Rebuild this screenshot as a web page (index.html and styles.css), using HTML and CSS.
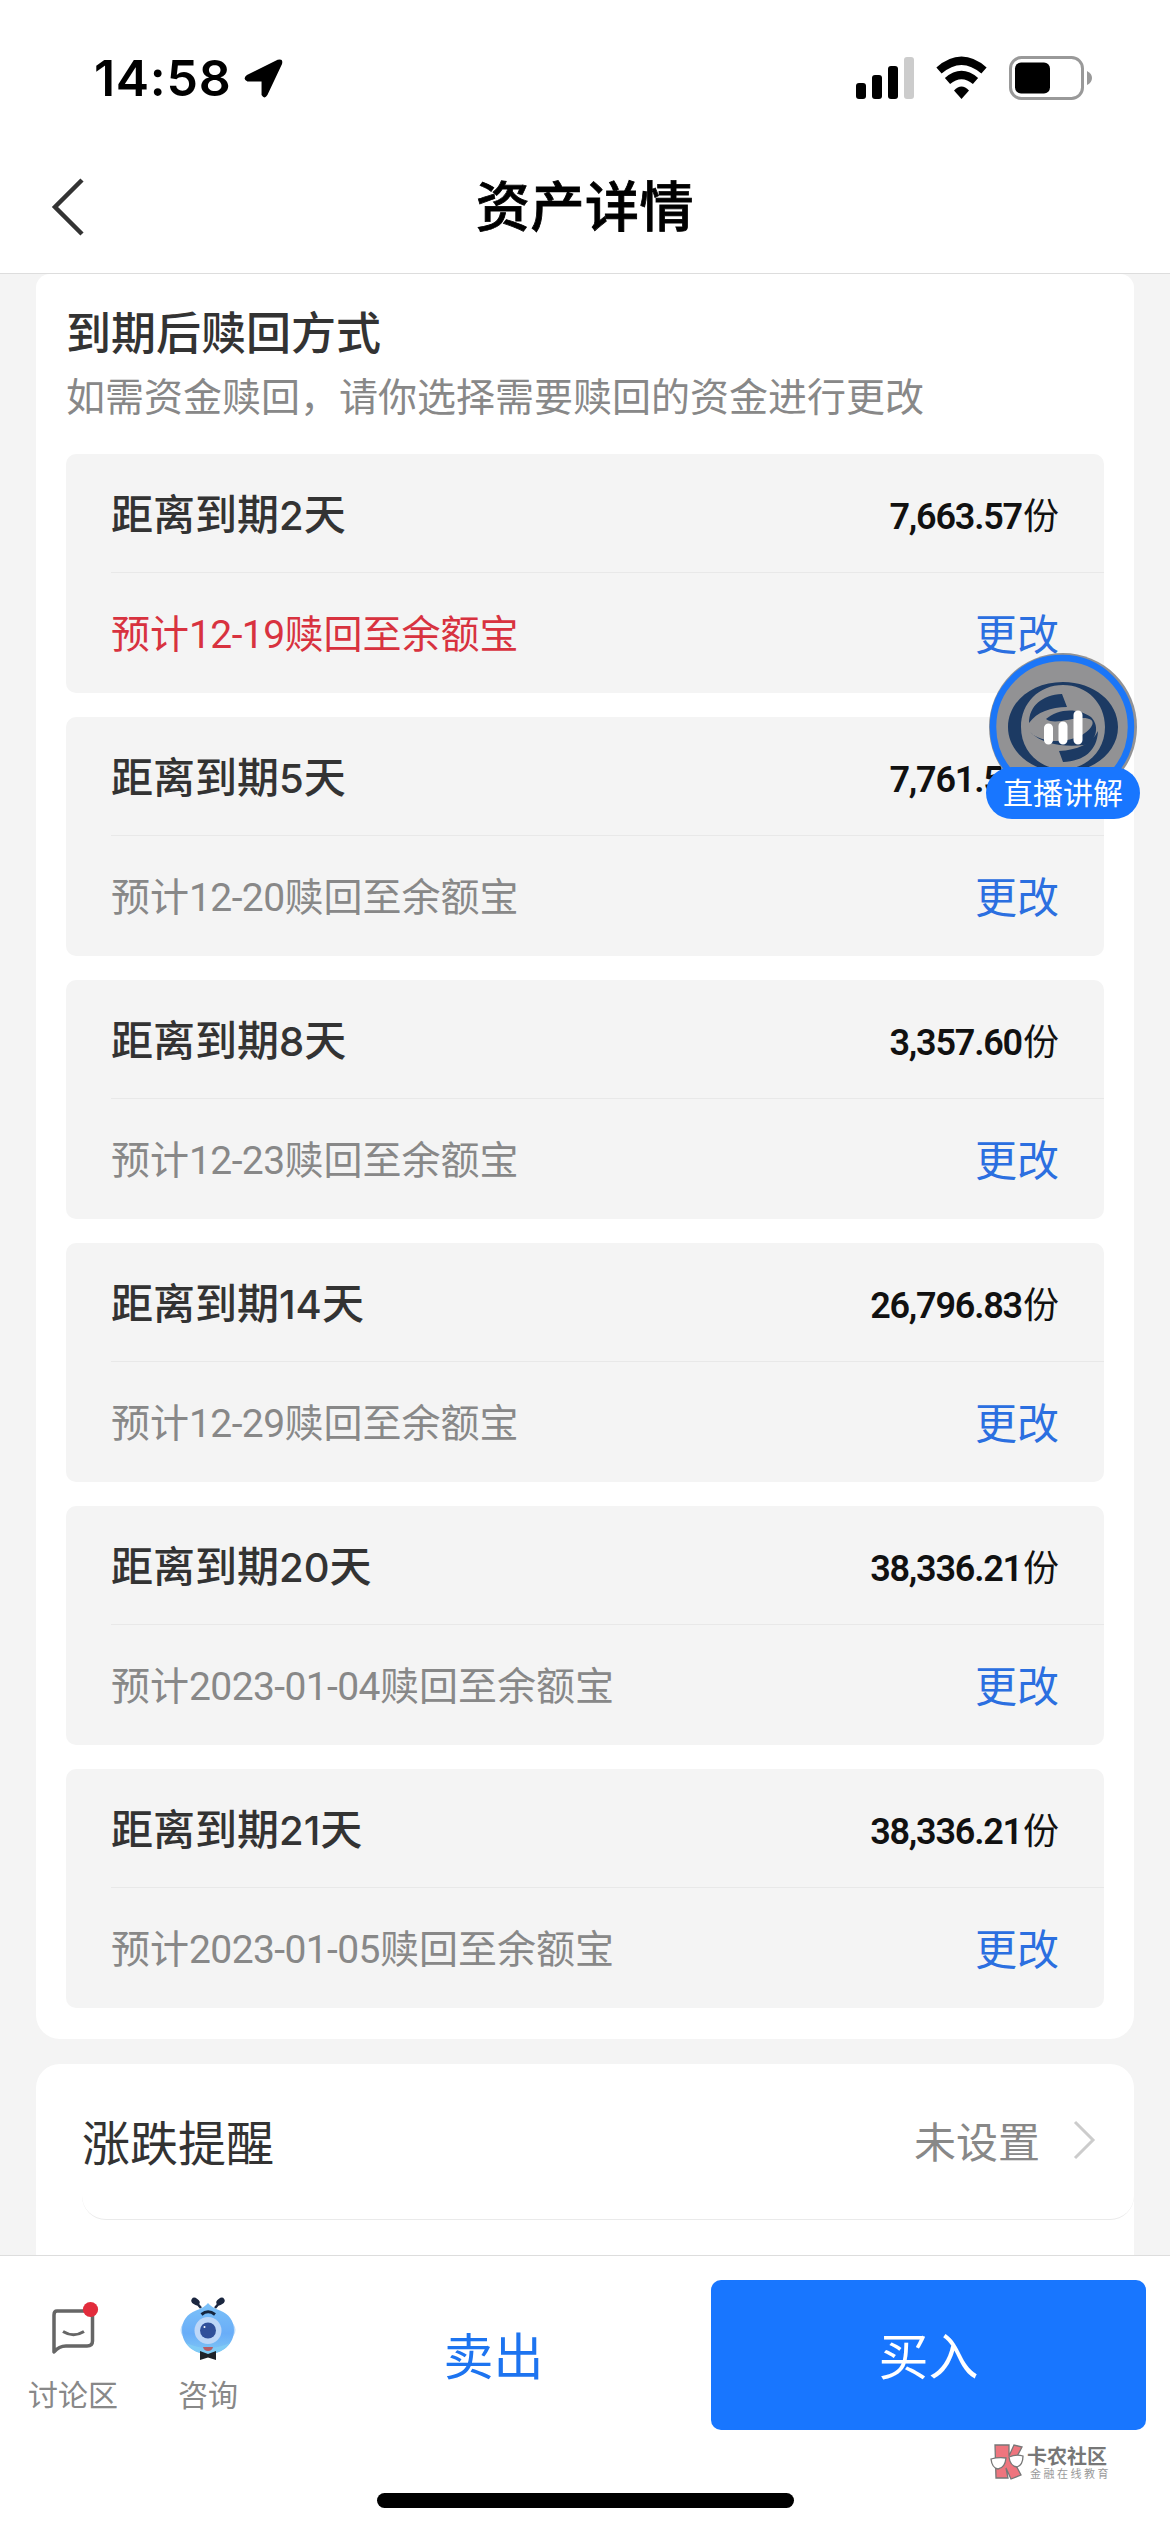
FILE: index.html
```html
<!DOCTYPE html>
<html lang="zh-CN">
<head>
<meta charset="utf-8">
<title>资产详情</title>
<link rel="stylesheet" href="styles.css">
</head>
<body>
<div class="screen">
  <header class="top">
    <div class="status">
      <span class="clock">14:58</span>
      <svg class="locate" viewBox="0 0 40 40"><path d="M3 16.500 34.500 .800Q40.500-1 39 5L24 37Q21 42 18 37V23H3.500Q-2 20.500 3 16.500Z"/></svg>
      <svg class="signals" viewBox="0 0 236 46">
        <rect x="0" y="28" width="10" height="16" rx="3"/><rect x="16" y="20" width="10" height="24" rx="3"/><rect x="32" y="11" width="10" height="33" rx="3"/><rect x="48" y="2" width="10" height="42" rx="3" fill="#ccc"/>
        <path d="M83 15.500Q105.500-4 128 15.500" fill="none" stroke="#000" stroke-width="8"/>
        <path d="M91.500 26Q105.500 14 119.500 26" fill="none" stroke="#000" stroke-width="8"/>
        <path d="M98 35.500Q105.500 27.500 113 35.500L105.500 44Z"/>
        <rect x="154.500" y="2.500" width="72" height="41" rx="11" fill="none" stroke="#999" stroke-width="3"/>
        <rect x="159" y="7.500" width="35" height="31" rx="6"/>
        <path d="M231 16q5 2.500 5 7t-5 7z" fill="#999"/>
      </svg>
    </div>
    <div class="nav">
      <svg class="back" viewBox="0 0 34 58"><path d="M31 2 4 29 31 56" fill="none" stroke="#333" stroke-width="4.500"/></svg>
      <h1>资产详情</h1>
    </div>
  </header>

  <main class="content">
    <section class="panel redeem">
      <h2>到期后赎回方式</h2>
      <p class="hint">如需资金赎回，请你选择需要赎回的资金进行更改</p>
      <ul class="lots">
        <li class="lot"><div class="line head"><b>距离到期<i>2</i>天</b><span class="amount"><i>7,663.57</i>份</span></div><div class="line foot due"><span>预计<i>12-19</i>赎回至余额宝</span><a>更改</a></div></li>
        <li class="lot"><div class="line head"><b>距离到期<i>5</i>天</b><span class="amount"><i>7,761.57</i>份</span></div><div class="line foot"><span>预计<i>12-20</i>赎回至余额宝</span><a>更改</a></div></li>
        <li class="lot"><div class="line head"><b>距离到期<i>8</i>天</b><span class="amount"><i>3,357.60</i>份</span></div><div class="line foot"><span>预计<i>12-23</i>赎回至余额宝</span><a>更改</a></div></li>
        <li class="lot"><div class="line head"><b>距离到期<i>14</i>天</b><span class="amount"><i>26,796.83</i>份</span></div><div class="line foot"><span>预计<i>12-29</i>赎回至余额宝</span><a>更改</a></div></li>
        <li class="lot"><div class="line head"><b>距离到期<i>20</i>天</b><span class="amount"><i>38,336.21</i>份</span></div><div class="line foot"><span>预计<i>2023-01-04</i>赎回至余额宝</span><a>更改</a></div></li>
        <li class="lot"><div class="line head"><b>距离到期<i>21</i>天</b><span class="amount"><i>38,336.21</i>份</span></div><div class="line foot"><span>预计<i>2023-01-05</i>赎回至余额宝</span><a>更改</a></div></li>
      </ul>
    </section>
    <section class="panel settings">
      <div class="setting"><span>涨跌提醒</span><span class="value">未设置</span><svg class="more" viewBox="0 0 22 40"><path d="M2 2 20 20 2 38" fill="none" stroke="#ccc" stroke-width="3"/></svg></div>
    </section>
  </main>

  <footer class="bar">
    <div class="actions">
      <div class="tool forum">
        <svg viewBox="0 0 60 66"><path d="M10 14H40Q45.500 14 45.500 19V44Q45.500 49 40 49H19Q12 49 7 55V18Q7 14 10 14Z" fill="none" stroke="#666" stroke-width="3.500" stroke-linejoin="round"/><path d="M16 34.500Q26.500 41 37 34.500" fill="none" stroke="#666" stroke-width="3"/><circle cx="43.500" cy="12.500" r="7.600" fill="#e22c3c"/></svg>
        <span>讨论区</span>
      </div>
      <div class="tool ask">
        <svg viewBox="0 0 60 66">
          <defs><linearGradient id="face" x1="0" y1="0" x2="0" y2="1"><stop offset="0" stop-color="#7cc2f8"/><stop offset=".6" stop-color="#69adf8"/><stop offset="1" stop-color="#80c8f5"/></linearGradient></defs>
          <path d="M23 11 17 4M37 11 43 4" stroke="#1b2740" stroke-width="2.500"/><ellipse cx="17.500" cy="4.500" rx="4.500" ry="3.200" transform="rotate(35 17.500 4.500)" fill="#1b2740"/><ellipse cx="42.500" cy="4.500" rx="4.500" ry="3.200" transform="rotate(-35 42.500 4.500)" fill="#1b2740"/>
          <ellipse cx="30" cy="33" rx="27.500" ry="16" fill="#bcdcfb"/>
          <path d="M30 6Q34 11 42 13.500C51 17 56 24 56 33C56 47 45 57 30 57S4 47 4 33C4 24 9 17 18 13.500Q26 11 30 6Z" fill="url(#face)"/>
          <path d="M8 46Q30 56 52 46Q44 57 30 57T8 46Z" fill="#80cbf5"/>
          <path d="M23.500 17.500Q30 12 37 17.500" fill="none" stroke="#15263f" stroke-width="3"/>
          <circle cx="30" cy="33.500" r="13.500" fill="#bdd7f8"/><circle cx="30" cy="33.500" r="8" fill="#30509a"/><circle cx="26.500" cy="30" r="1" fill="#fff"/>
          <path d="M25 50H35Q34 54 30 54T25 50Z" fill="#b75d66"/><path d="M22 54 30 57 38 54V63L30 60.500 22 63Z" fill="#1e2228"/>
        </svg>
        <span>咨询</span>
      </div>
      <button class="sell">卖出</button>
      <button class="buy">买入</button>
    </div>
    <div class="home"></div>
  </footer>

  <div class="live">
    <svg viewBox="0 0 150 150">
      <circle cx="75" cy="75" r="74" fill="#929294"/><circle cx="74" cy="75" r="69" fill="none" stroke="#1b76f8" stroke-width="6.500"/>
      <path fill-rule="evenodd" fill="#1c3a63" d="M75 30C106 30 130 50 130 75S106 120 75 120 20 100 20 75 44 30 75 30ZM75 33C51 33 33 51 33 75S51 117 75 117 117 99 117 75 99 33 75 33Z"/>
      <path d="M74 42 79 55C63 55 49 60 41 71C41 54 54 43 74 42Z" fill="#1c3a63"/>
      <path d="M58 67C69 57 89 55 103 65C113 75 107 91 96 93C77 95 55 93 42 80C53 91 77 92 94 83C107 75 109 66 95 66C82 66 66 73 58 67Z" fill="#1c3a63"/>
      <path d="M71 99C89 98 104 92 110 79C109 99 96 109 75 110Z" fill="#1c3a63"/>
      <path d="M60.500 76V88M75 74V88M90 63V88" stroke="#fff" stroke-width="9" stroke-linecap="round"/>
    </svg>
    <span>直播讲解</span>
  </div>

  <div class="mark">
    <svg viewBox="0 0 34 36"><g stroke="#777" stroke-width="1.300"><path d="M5 1H19V12L24 1 32 3 24 18 31 31 21 35 16 24 18 34H6Z" fill="#ee757e"/><path d="M1 15Q8 13 16 14Q15 24 8 25Q2 24 1 15ZM19 13Q26 10 33 12Q33 21 27 23Q20 22 19 13Z" fill="#fff"/></g></svg>
    <div><strong>卡农社区</strong><small>金融在线教育</small></div>
  </div>
</div>
</body>
</html>
```
FILE: styles.css
```css
* { box-sizing: border-box; margin: 0; padding: 0; }
body { width: 1170px; height: 2532px; overflow: hidden; background: #f4f4f4; color: #333; font-family: "Noto Sans CJK SC", sans-serif; }
i { font-style: normal; }
svg { display: block; overflow: visible; }
.screen { position: relative; width: 1170px; height: 2532px; display: flex; flex-direction: column; }

.top { height: 274px; flex: none; background: #fff; border-bottom: 1px solid #ddd; }
.status { height: 140px; padding: 16px 78px 0 94px; display: flex; align-items: center; }
.clock { font: 600 50px/1 Inter, sans-serif; color: #000; width: 150px; white-space: nowrap; letter-spacing: .7px; }
.locate { width: 39px; height: 39px; }
.signals { width: 236px; height: 46px; margin-left: auto; }
.nav { height: 133px; display: grid; grid-template-columns: 120px 1fr 120px; align-items: center; }
.back { width: 34px; height: 58px; margin-left: 51px; }
.nav h1 { font-size: 54px; line-height: 80px; font-weight: 500; letter-spacing: .6px; -webkit-text-stroke: .8px #000; color: #000; text-align: center; padding-bottom: 5px; }

.content { flex: 1; min-height: 0; overflow: hidden; padding: 0 36px; display: flex; flex-direction: column; gap: 25px; }
.panel { background: #fff; border-radius: 24px; flex: none; }
.redeem { height: 1765px; padding: 27px 30px 0; border-radius: 14px 14px 24px 24px; }
.redeem h2 { font-size: 45px; line-height: 60px; font-weight: 500; }
.hint { font-size: 39px; line-height: 66px; color: #888; }
.lots { list-style: none; display: flex; flex-direction: column; gap: 24px; margin-top: 27px; }
.lot { height: 239px; background: #f4f4f4; border-radius: 10px; padding-left: 45px; }
.line { display: flex; align-items: center; justify-content: space-between; padding: 0 45px 4px 0; }
.head { height: 119px; border-bottom: 1px solid #e8e8e8; }
.head b { font-size: 42px; font-weight: 500; }
.head b i { font-family: Inter, sans-serif; font-size: 40px; }
.amount { font-size: 36px; color: #111; padding-top: 4px; }
.amount i { font-family: Roboto, sans-serif; font-weight: 600; font-size: 36px; letter-spacing: -1.2px; margin-right: 1px; }
.foot { height: 120px; font-size: 39px; color: #888; }
.foot i { font-family: Roboto, sans-serif; letter-spacing: -.6px; }
.foot a { font-size: 42px; color: #2b6fe0; }
.due { color: #d8323f; }

.settings { height: 240px; padding-left: 46px; }
.setting { height: 156px; border-bottom: 1px solid #eaeaea; border-radius: 0 0 24px 24px; display: flex; align-items: center; font-size: 48px; padding: 0 39px 4px 0; }
.value { margin-left: auto; font-size: 42px; color: #888; }
.more { width: 22px; height: 40px; margin-left: 33px; }

.bar { flex: none; height: 277px; background: #fff; border-top: 1px solid #ddd; }
.actions { display: flex; height: 175px; padding: 24px 24px 0 0; }
.tool { width: 146px; display: flex; flex-direction: column; align-items: center; padding-top: 17px; font-size: 30px; line-height: 42px; color: #888; }
.tool svg { width: 60px; height: 66px; margin-bottom: 9px; }
.forum svg { margin-left: 8px; }
.ask { width: 124px; }
button { border: 0; font: 400 50px "Noto Sans CJK SC", sans-serif; padding-bottom: 4px; }
.sell { flex: 1; height: 150px; background: none; color: #1d74f0; padding-left: 6px; }
.buy { width: 435px; height: 150px; border-radius: 10px; background: #1876ff; color: #fff; }
.home { width: 417px; height: 15px; border-radius: 8px; background: #000; margin: 62px auto 0; }

.live { position: absolute; left: 986px; top: 652px; width: 154px; height: 168px; }
.live svg { width: 150px; height: 150px; margin-left: 2px; }
.live span { position: absolute; left: 0; top: 115px; width: 154px; height: 52px; border-radius: 26px; background: #1876ff; color: #fff; font-size: 30px; line-height: 49px; text-align: center; }

.mark { position: absolute; left: 990px; top: 2444px; display: flex; gap: 3px; color: #777; }
.mark svg { width: 34px; height: 36px; }
.mark div { display: flex; flex-direction: column; }
.mark strong { font-size: 20px; line-height: 23px; font-weight: 700; white-space: nowrap; }
.mark small { font-size: 11px; line-height: 13px; letter-spacing: 2.500px; padding-left: 3px; white-space: nowrap; color: #999; }
```
